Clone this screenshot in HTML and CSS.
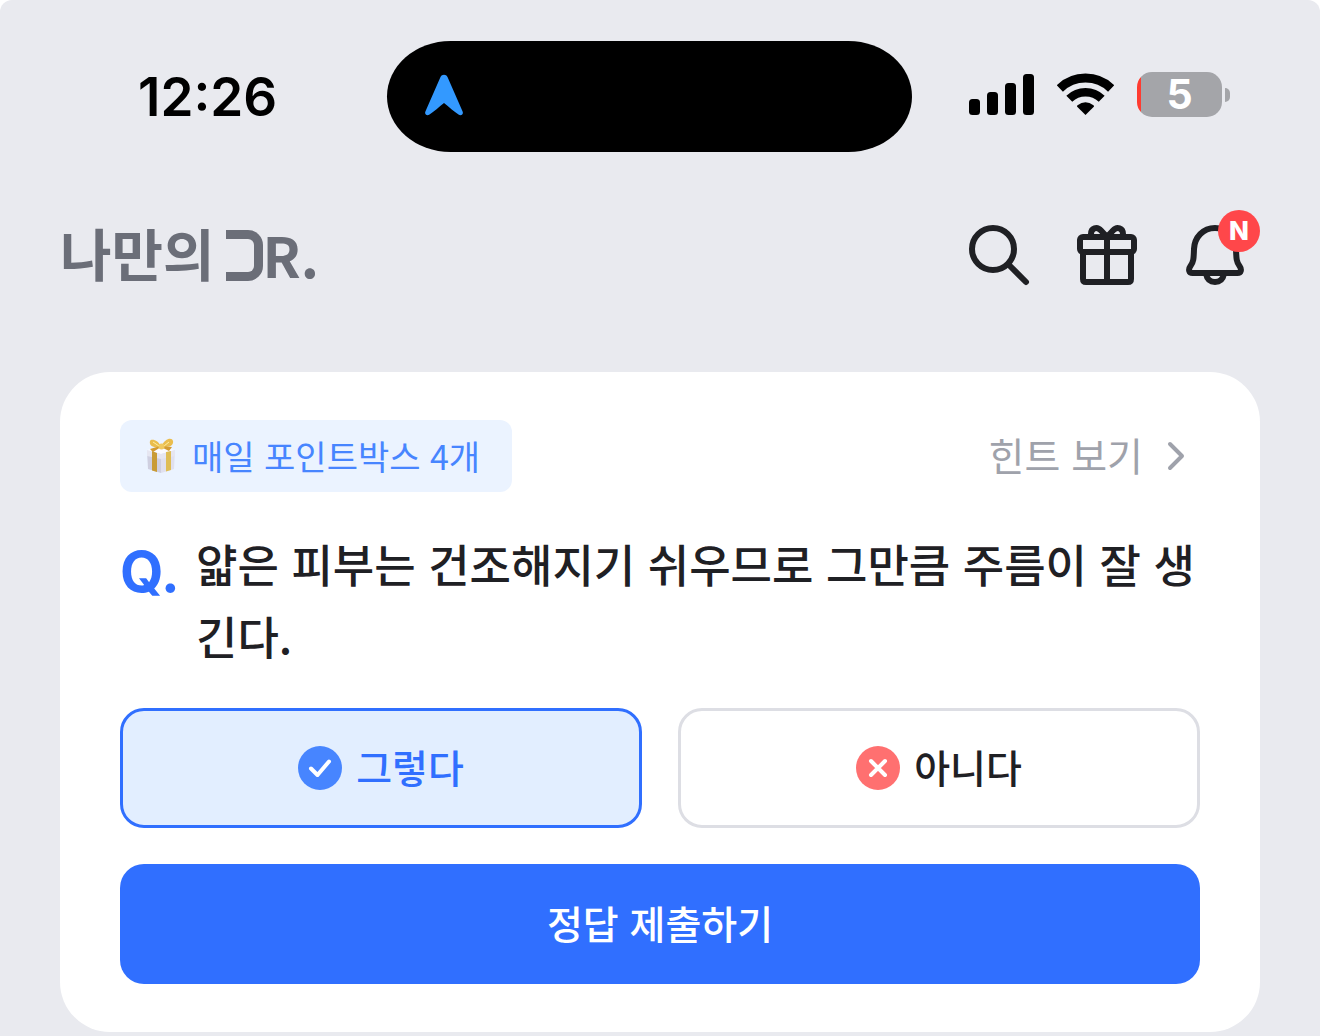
FILE: index.html
```html
<!DOCTYPE html>
<html lang="ko">
<head>
<meta charset="utf-8">
<meta name="viewport" content="width=device-width, initial-scale=1">
<title>나만의 DR.</title>
<link rel="stylesheet" href="styles.css">
</head>
<body>
<div class="screen">
  <div class="status">
    <time class="clock">12:26</time>
    <div class="island">
      <svg class="location" viewBox="0 0 40 42" aria-hidden="true"><path d="M16.500 3C17.800 0 22.200 0 23.500 3L38.600 37.500C39.800 40.400 37 42.300 34.500 40.500C30 37.500 25 33 20 29C15 33 10 37.500 5.500 40.500C3 42.300.2 40.400 1.400 37.500Z" fill="#3399ff"/></svg>
    </div>
    <div class="indicators">
      <svg class="signal" viewBox="0 0 65 43" aria-hidden="true"><rect y="26" width="11" height="16" rx="3.500"/><rect x="18" y="19" width="11" height="23" rx="3.500"/><rect x="36" y="10" width="11" height="32" rx="3.500"/><rect x="54" y="1" width="11" height="41" rx="3.500"/></svg>
      <svg class="wifi" viewBox="0 0 57 43" aria-hidden="true"><g fill="none" stroke="#000"><path d="M2.800 15.500A37 37 0 0 1 54.200 15.500" stroke-width="9"/><path d="M12.300 25.800A23.300 23.300 0 0 1 44.700 25.800" stroke-width="8.500"/></g><path d="M28.500 42L20.200 33.700Q19.700 33 20.500 32.300Q28.500 26 36.500 32.300Q37.300 33 36.800 33.700Z"/></svg>
      <div class="battery"><span class="battery-level">5</span></div>
    </div>
  </div>

  <header class="header">
    <a class="logo" href="#" aria-label="나만의 DR."><span class="logo-name">나만의</span><span class="logo-mark"></span><span class="logo-suffix">R.</span></a>
    <nav class="actions">
      <button class="icon-button" type="button" aria-label="검색">
        <svg class="icon" viewBox="0 0 72 72"><circle cx="30" cy="30" r="21"/><path d="M45.500 45.500L63 63"/></svg>
      </button>
      <button class="icon-button" type="button" aria-label="선물">
        <svg class="icon" viewBox="0 0 72 72"><rect x="9" y="18" width="54" height="15" rx="3"/><path d="M12 33V60Q12 63 15 63H57Q60 63 60 60V33M36 18V63M36 18L30 11.500C26 7 20 9 20 15V18M36 18L42 11.500C46 7 52 9 52 15V18"/></svg>
      </button>
      <button class="icon-button" type="button" aria-label="알림">
        <svg class="icon" viewBox="0 0 72 72"><path d="M36 9C24 9 15.500 18.500 15 30C14.700 40 14.500 43 11.500 47C9 50.500 10 54 13.500 54H58.500C62 54 63 50.500 60.500 47C57.500 43 57.300 40 57 30C56.500 18.500 48 9 36 9ZM27 55C28 60 31 63 36 63C41 63 44 60 45 55"/></svg>
        <span class="badge">N</span>
      </button>
    </nav>
  </header>

  <main class="card">
    <div class="card-top">
      <span class="chip">
        <svg class="gift" viewBox="0 0 28 36" aria-hidden="true"><path d="M0 13L14 16V35L1 31Z" fill="#cfcfe0"/><path d="M14 16L28 12L27 31L14 35Z" fill="#e0e0ee"/><path d="M0 12L14 9L28 12L14 16Z" fill="#fafaff"/><path d="M0 12L14 16L28 12V18L14 21L0 18Z" fill="#e6e6f1"/><path d="M5 13L10 15V34L5 32.500Z" fill="#c99b35"/><path d="M19 14L24 13V32L19 33.500Z" fill="#dfbd55"/><path d="M14 9C12 2 4 0 3 3C2 7 5 10 14 9C18 0 25-1 26 3C27 8 21 10 14 9Z" fill="#eabd4d"/><path d="M13 8L3 11L6 14L14 9L22 13L25 9Z" fill="#d49c32"/><path d="M6 4L12 8M22 4L17 8" stroke="#fff0a2" stroke-width="1"/><circle cx="14.500" cy="8.500" r="3" fill="#f0c95f"/></svg>
        매일 포인트박스 4개
      </span>
      <a class="hint" href="#"><span class="hint-text">힌트 보기</span>
        <svg class="chevron" viewBox="0 0 18 30" aria-hidden="true"><path d="M3 3L15 15L3 27"/></svg>
      </a>
    </div>
    <form class="quiz">
      <div class="question">
        <span class="question-mark">Q.</span>
        <h1 class="question-text" id="question">얇은 피부는 건조해지기 쉬우므로 그만큼 주름이 잘 생긴다.</h1>
      </div>
      <div class="options" role="radiogroup" aria-labelledby="question">
        <label class="option">
          <input class="option-input" type="radio" name="answer" value="yes" checked>
          <svg class="option-icon" viewBox="0 0 44 44" aria-hidden="true"><circle cx="22" cy="22" r="22" fill="#4785ff"/><path d="M13 22.500L19.500 29L31 15.500"/></svg>
          <span class="option-text">그렇다</span>
        </label>
        <label class="option">
          <input class="option-input" type="radio" name="answer" value="no">
          <svg class="option-icon" viewBox="0 0 44 44" aria-hidden="true"><circle cx="22" cy="22" r="22" fill="#ff7070"/><path d="M15 15L29 29M29 15L15 29"/></svg>
          <span class="option-text">아니다</span>
        </label>
      </div>
      <button class="submit" type="button">정답 제출하기</button>
    </form>
  </main>
</div>
</body>
</html>
```
FILE: styles.css
```css
* { box-sizing: border-box; }

body {
  margin: 0;
  background: #fff;
  color: #1f2024;
  font-family: "Noto Sans CJK KR", sans-serif;
  font-size: 39px;
  font-weight: 400;
}

a { color: inherit; text-decoration: none; }
button { padding: 0; border: 0; font: inherit; cursor: pointer; }
svg { display: block; flex: none; }

.screen {
  min-height: 100vh;
  padding-bottom: 4px;
  border-radius: 12px 12px 0 0;
  background: #e9eaef;
}

.status {
  display: grid;
  grid-template-columns: 1fr 525px 1fr;
  align-items: center;
  padding: 41px 90px 0 69px;
}

.clock {
  padding-left: 69px;
  color: #000;
  font: 600 53px/64px Inter, sans-serif;
}

.island {
  display: flex;
  align-items: center;
  height: 111px;
  padding: 0 37px 4px;
  border-radius: 64px / 56px;
  background: #000;
}

.location { width: 40px; height: 42px; }

.indicators {
  display: flex;
  justify-content: flex-end;
  align-items: center;
  gap: 23px;
  padding-bottom: 4px;
}

.signal { width: 65px; height: 43px; }
.wifi { width: 57px; height: 43px; }

.battery {
  display: flex;
  align-items: center;
  gap: 3px;
}

.battery::after {
  content: "";
  width: 5px;
  height: 14px;
  border-radius: 0 5px 5px 0;
  background: #a4a5a9;
}

.battery-level {
  width: 85px;
  border-radius: 15px;
  background: linear-gradient(90deg, #ff3b30 4px, #a4a5a9 4px);
  color: #fff;
  font: 700 41px/45px Inter, sans-serif;
  text-align: center;
}

.header {
  display: flex;
  justify-content: space-between;
  align-items: center;
  padding: 67px 69px 81px 60px;
}

.logo {
  display: flex;
  align-items: center;
  color: #6b6e78;
  font-size: 56px;
  font-weight: 700;
  line-height: 64px;
}

.logo-name { padding-bottom: 6px; }
.logo-suffix { padding-bottom: 2px; }

.logo-mark {
  width: 37px;
  height: 51px;
  margin-left: 11px;
  border: 9px solid #6b6e78;
  border-left: 0;
  border-radius: 0 15px 15px 0;
}

.actions { display: flex; gap: 36px; }

.icon-button {
  position: relative;
  background: none;
}

.icon {
  width: 72px;
  height: 72px;
  fill: none;
  stroke: #1f2024;
  stroke-width: 6;
  stroke-linecap: round;
  stroke-linejoin: round;
}

.badge {
  position: absolute;
  top: -9px;
  right: -9px;
  width: 42px;
  border-radius: 50%;
  background: #ff474a;
  color: #fff;
  font: 800 26px/42px Inter, sans-serif;
  text-align: center;
}

.card {
  display: grid;
  gap: 36px;
  margin: 0 60px;
  padding: 48px 60px;
  border-radius: 50px;
  background: #fff;
}

.card-top {
  display: flex;
  justify-content: space-between;
  align-items: center;
}

.chip {
  display: flex;
  align-items: center;
  gap: 17px;
  padding: 0 32px 0 27px;
  border-radius: 12px;
  background: #ebf3ff;
  color: #4785ff;
  font-size: 34px;
  line-height: 72px;
}

.gift { width: 28px; height: 36px; }

.hint {
  display: flex;
  align-items: center;
  gap: 24px;
  padding-right: 15px;
  color: #9fa2ab;
  line-height: 64px;
}

.hint-text { padding-bottom: 4px; }

.chevron {
  width: 18px;
  height: 30px;
  fill: none;
  stroke: currentColor;
  stroke-width: 4;
  stroke-linecap: round;
  stroke-linejoin: round;
}

.quiz { display: grid; gap: 36px; }

.question {
  display: grid;
  grid-template-columns: 76px 1fr;
}

.question-mark {
  color: #306fff;
  font: 700 56px/88px Inter, sans-serif;
}

.question-text {
  margin: 0;
  font-size: 45px;
  font-weight: 500;
  line-height: 72px;
  word-break: break-all;
}

.options {
  display: grid;
  grid-template-columns: 1fr 1fr;
  gap: 36px;
}

.option {
  position: relative;
  display: flex;
  justify-content: center;
  align-items: center;
  gap: 14px;
  height: 120px;
  border: 3px solid #dddee4;
  border-radius: 24px;
  font-weight: 500;
  cursor: pointer;
}

.option:has(:checked) {
  border-color: #306fff;
  background: #e2eeff;
  color: #306fff;
}

.option-input {
  position: absolute;
  inset: 0;
  margin: 0;
  opacity: 0;
  cursor: pointer;
}

.option-icon {
  width: 44px;
  height: 44px;
  fill: none;
  stroke: #fff;
  stroke-width: 4;
  stroke-linecap: round;
  stroke-linejoin: round;
}

.option-icon circle { stroke: none; }

.option-text { padding-bottom: 4px; }

.submit {
  height: 120px;
  padding-bottom: 4px;
  border-radius: 24px;
  background: #306fff;
  color: #fff;
  font-weight: 500;
}
```
